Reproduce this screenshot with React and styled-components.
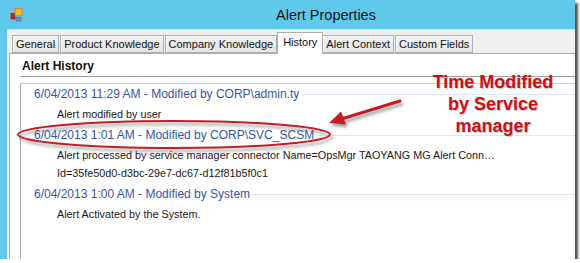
import React from 'react';
import styled, { createGlobalStyle } from 'styled-components';

const GlobalStyle = createGlobalStyle`
  html, body {
    margin: 0;
    padding: 0;
    background: #ffffff;
  }
  body {
    font-family: "Liberation Sans", Arial, sans-serif;
  }
`;

const Frame = styled.div`
  position: relative;
  width: 575px;
  height: 259px;
  background: #5ec9ea;
  display: flex;
  flex-direction: column;
  box-shadow: 3px 3px 2px rgba(50, 45, 40, 0.8);
`;

const TitleBar = styled.div`
  height: 29px;
  flex-shrink: 0;
  display: flex;
  align-items: center;
  padding-left: 10px;
`;

const Title = styled.div`
  margin-left: 253px;
  font-size: 14.5px;
  color: #141414;
`;

const Client = styled.div`
  flex: 1;
  min-height: 0;
  margin-left: 7px;
  background: #f0f0f0;
  border-top: 1px solid #e4e4e4;
  padding: 2px 0 0 2px;
  display: flex;
  flex-direction: column;
`;

const TabStrip = styled.div`
  display: flex;
  align-items: flex-end;
  padding-left: 3px;
  position: relative;
  z-index: 1;
  margin-bottom: -1px;
`;

const Tab = styled.div`
  height: ${p => (p.$active ? '20px' : '16px')};
  line-height: ${p => (p.$active ? '18px' : '16px')};
  padding: 0 ${p => (p.$active ? '5px' : '3px')};
  margin: ${p => (p.$active ? '0 -1px' : '0 1px 1px 0')};
  font-size: 11px;
  color: #111;
  background: ${p => (p.$active ? '#ffffff' : 'linear-gradient(#f2f2f2, #e6e6e6)')};
  border: 1px solid #adadad;
  border-bottom: ${p => (p.$active ? '1px solid #ffffff' : '1px solid #adadad')};
  box-shadow: ${p => (p.$active ? 'none' : 'inset 1px 1px 0 #fafafa')};
  white-space: nowrap;
  position: relative;
  z-index: ${p => (p.$active ? 2 : 1)};
`;

const Panel = styled.div`
  flex: 1;
  min-height: 0;
  background: #ffffff;
  border-left: 1px solid #adadad;
  border-top: 1px solid #adadad;
  padding: 0 0 0 10px;
  display: flex;
  flex-direction: column;
`;

const GroupLabel = styled.div`
  font-size: 12px;
  font-weight: bold;
  color: #111;
  line-height: 14px;
  margin-top: 5px;
  padding-left: 2px;
  padding-bottom: 3px;
  border-bottom: 1px solid #a0a0a0;
`;

const HistoryList = styled.div`
  flex: 1;
  margin-top: 6px;
  border-left: 1px solid #a9aeb8;
  border-top: 1px solid #c9ced6;
  padding: 0 0 0 13px;
  display: flex;
  flex-direction: column;
`;

const EntryHeader = styled.div`
  display: flex;
  align-items: center;
  height: 18px;
  margin-top: ${p => (p.$first ? '1px' : '3px')};
  font-size: 12px;
  color: #3556a6;
  white-space: nowrap;
`;

const HeaderRule = styled.div`
  flex: 1;
  height: 1px;
  margin-left: 3px;
  background: #dce5f3;
`;

const EntryLine = styled.div`
  height: 18px;
  line-height: 18px;
  margin-top: ${p => (p.$first ? '2px' : '0')};
  padding-left: 23px;
  font-size: 10.8px;
  color: #1a1a1a;
  white-space: nowrap;
`;

const Overlay = styled.svg`
  position: absolute;
  left: 0;
  top: 0;
  width: 575px;
  height: 259px;
  pointer-events: none;
`;

const Callout = styled.div`
  position: absolute;
  left: 413px;
  top: 71px;
  width: 160px;
  text-align: center;
  font-family: "Liberation Sans", Arial, sans-serif;
  font-weight: bold;
  font-size: 18px;
  line-height: 22px;
  color: #c8101a;
  text-shadow: 1px 1px 1px rgba(120, 120, 120, 0.45);
`;

const AppIcon = () => (
  <svg width="13" height="14" viewBox="0 0 13 14">
    <rect x="0.5" y="0.5" width="12" height="13" fill="none" stroke="#9bb4c4" strokeWidth="1" />
    <rect x="1" y="5.5" width="4" height="5.5" fill="#c9262a" stroke="#7a1212" strokeWidth="0.6" />
    <rect x="5" y="0.8" width="7" height="7" fill="#f6c21b" stroke="#c97a0b" strokeWidth="0.8" />
    <rect x="6" y="9.5" width="5" height="3.5" fill="#5f8fdc" stroke="#3a64b0" strokeWidth="0.6" />
  </svg>
);

const tabs = ['General', 'Product Knowledge', 'Company Knowledge', 'History', 'Alert Context', 'Custom Fields'];

const entries = [
  {
    header: '6/04/2013 11:29 AM - Modified by CORP\\admin.ty',
    lines: ['Alert modified by user'],
  },
  {
    header: '6/04/2013 1:01 AM - Modified by CORP\\SVC_SCSM',
    lines: [
      'Alert processed by service manager connector Name=OpsMgr TAOYANG MG Alert Conn\u2026',
      'Id=35fe50d0-d3bc-29e7-dc67-d12f81b5f0c1',
    ],
  },
  {
    header: '6/04/2013 1:00 AM - Modified by System',
    lines: ['Alert Activated by the System.'],
  },
];

export default function App() {
  return (
    <>
      <GlobalStyle />
      <Frame>
        <TitleBar>
          <AppIcon />
          <Title>Alert Properties</Title>
        </TitleBar>
        <Client>
          <TabStrip>
            {tabs.map(t => (
              <Tab key={t} $active={t === 'History'}>{t}</Tab>
            ))}
          </TabStrip>
          <Panel>
            <GroupLabel>Alert History</GroupLabel>
            <HistoryList>
              {entries.map((e, i) => (
                <React.Fragment key={e.header}>
                  <EntryHeader $first={i === 0}>
                    <span>{e.header}</span>
                    <HeaderRule />
                  </EntryHeader>
                  {e.lines.map((l, j) => (
                    <EntryLine key={l} $first={j === 0}>{l}</EntryLine>
                  ))}
                </React.Fragment>
              ))}
            </HistoryList>
          </Panel>
        </Client>

        <Overlay viewBox="0 0 575 259">
          <defs>
            <filter id="shade" x="-10%" y="-40%" width="120%" height="180%">
              <feDropShadow dx="2" dy="3" stdDeviation="1.6" floodColor="#555" floodOpacity="0.55" />
            </filter>
          </defs>
          <ellipse cx="174" cy="134.5" rx="156" ry="13.5" fill="none" stroke="#c41e24" strokeWidth="2" filter="url(#shade)" />
          <g filter="url(#shade)">
            <line x1="400" y1="101" x2="343" y2="118.5" stroke="#c41e24" strokeWidth="3" strokeLinecap="round" />
            <polygon points="329,123 341,111.5 346,124.5" fill="#c41e24" />
          </g>
        </Overlay>
        <Callout>
          Time Modified
          <br />
          by Service
          <br />
          manager
        </Callout>
      </Frame>
    </>
  );
}
